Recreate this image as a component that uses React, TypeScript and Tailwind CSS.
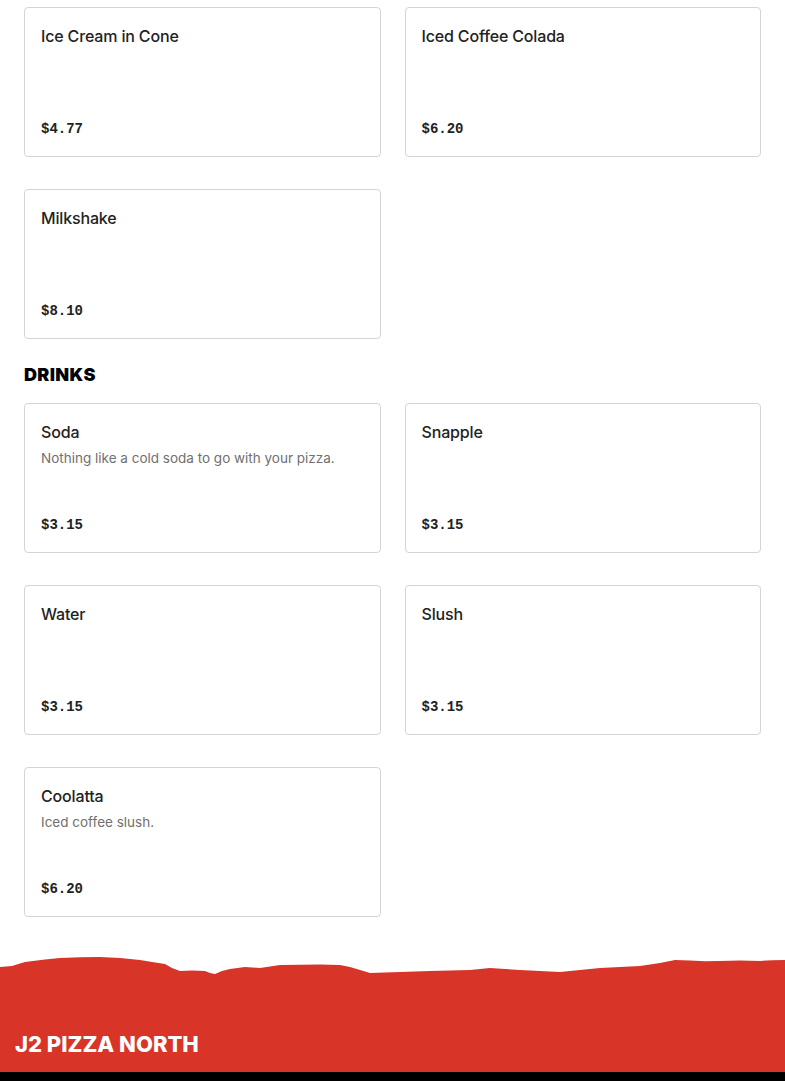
import React from "react";

type Item = { name: string; price: string; desc?: string };

const desserts: Item[] = [
  { name: "Ice Cream in Cone", price: "$4.77" },
  { name: "Iced Coffee Colada", price: "$6.20" },
  { name: "Milkshake", price: "$8.10" },
];

const drinks: Item[] = [
  { name: "Soda", price: "$3.15", desc: "Nothing like a cold soda to go with your pizza." },
  { name: "Snapple", price: "$3.15" },
  { name: "Water", price: "$3.15" },
  { name: "Slush", price: "$3.15" },
  { name: "Coolatta", price: "$6.20", desc: "Iced coffee slush." },
];

function Card({ item }: { item: Item }) {
  return (
    <div className="flex h-[150px] flex-col rounded-[4px] border border-[#d4d4d4] bg-white px-4 pb-[15px] pt-4">
      <div className="text-[16px] font-medium leading-6 tracking-[-0.01em] text-[#222222] [font-family:Inter,'Noto_Sans',sans-serif]">
        {item.name}
      </div>
      {item.desc && (
        <div className="mt-1 text-[13.5px] leading-5 text-[#707070] [font-family:Inter,'Noto_Sans',sans-serif]">
          {item.desc}
        </div>
      )}
      <div className="mt-auto text-[14px] font-bold leading-6 text-[#222222] [font-family:'Liberation_Mono',monospace]">
        {item.price}
      </div>
    </div>
  );
}

const wave =
  "M0 17 L12 16 L25 12 L33 11 L45 9.5 L60 8 L80 7.2 L100 7 L120 8 L140 10 L152 12 L165 14 L172 18 L180 21 L192 20.5 L205 21 L210 23 L215 24 L222 21 L230 19 L245 17 L260 18 L280 15 L300 14.8 L320 14.6 L340 15 L350 17 L360 20 L370 23 L385 22.5 L400 22 L415 21.5 L430 21 L450 20.5 L470 20 L490 18 L505 19 L520 20 L540 21 L560 22 L580 20 L600 18 L620 17 L640 16 L660 13 L675 10 L690 10.5 L705 11.2 L720 11 L740 10.5 L760 11 L772 10.2 L785 10 L785 25 L0 25 Z";

export default function App() {
  return (
    <div className="min-h-screen bg-white [font-family:Inter,'Noto_Sans',sans-serif]">
      <div className="px-6 pt-[7px]">
        <div className="grid grid-cols-2 gap-x-6 gap-y-8">
          {desserts.map((d) => (
            <Card key={d.name} item={d} />
          ))}
        </div>
        <h2 className="mb-4 mt-6 text-[18px] font-black uppercase leading-6 tracking-[0.02em] text-black">
          Drinks
        </h2>
        <div className="grid grid-cols-2 gap-x-6 gap-y-8">
          {drinks.map((d) => (
            <Card key={d.name} item={d} />
          ))}
        </div>
      </div>
      <footer className="mt-[33px]">
        <svg className="block h-[25px] w-full" viewBox="0 0 785 25" preserveAspectRatio="none">
          <path d={wave} fill="#d83428" />
        </svg>
        <div className="bg-[#d83428] px-[15px] pb-[14px] pt-[55px]">
          <div className="text-[22px] font-extrabold uppercase leading-7 text-white">
            J2 Pizza North
          </div>
        </div>
        <div className="h-[9px] bg-black" />
      </footer>
    </div>
  );
}
